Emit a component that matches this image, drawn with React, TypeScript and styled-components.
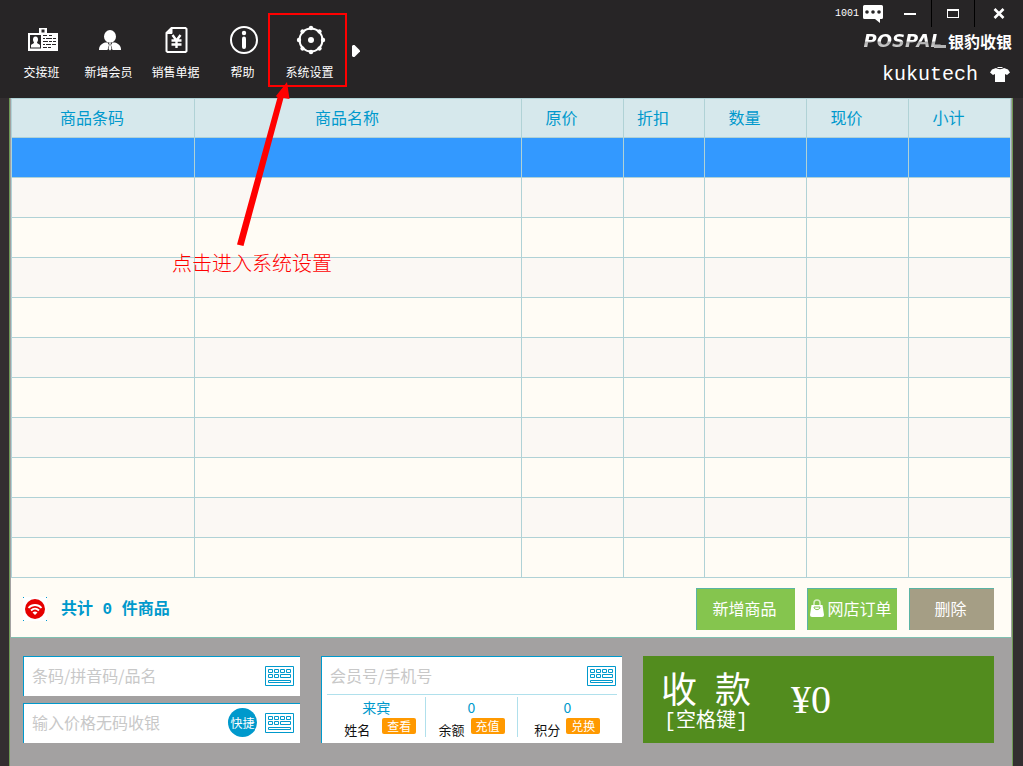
import React from "react";
import styled, { createGlobalStyle, css } from "styled-components";

const GlobalStyle = createGlobalStyle`
  *, *::before, *::after { box-sizing: border-box; }
  body {
    margin: 0;
    background: #332e30;
    font-family: "Noto Sans CJK SC", "Liberation Sans", sans-serif;
    font-size: 16px;
    color: #0099cc;
  }
  button, input { font: inherit; }
  button { margin: 0; padding: 0; border: 0; cursor: pointer; }
  svg { display: block; flex: none; }
`;

const Page = styled.div`
  min-height: 100vh;
  display: flex;
  flex-direction: column;
`;

/* ---------- title bar ---------- */

const Header = styled.header`
  display: flex;
  justify-content: space-between;
  height: 98px;
  background: #272526;
  color: #fff;
`;

const Toolbar = styled.nav`
  display: flex;
  align-items: flex-start;
  padding: 13px 0 0 8px;
`;

const ToolButton = styled.button`
  display: flex;
  flex-direction: column;
  align-items: center;
  gap: 8px;
  width: 67px;
  height: 74px;
  padding-top: 12px;
  background: none;
  color: #fff;
  font-size: 12px;
  line-height: 18px;
  white-space: nowrap;
`;

const Highlighted = styled.div`
  position: relative;
`;

const HighlightFrame = styled.div`
  position: absolute;
  inset: 0 -4px 0 -8px;
  border: 2px solid #f00;
  pointer-events: none;
`;

const Arrow = styled.svg`
  position: absolute;
  left: -40px;
  top: 67px;
  z-index: 2;
  pointer-events: none;
`;

const Callout = styled.p`
  position: absolute;
  left: -104px;
  top: 236px;
  z-index: 2;
  margin: 0;
  color: #f00;
  font-size: 20px;
  font-weight: 300;
  line-height: 28px;
  white-space: nowrap;
`;

const MoreButton = styled.button`
  display: flex;
  align-items: center;
  height: 76px;
  padding-left: 9px;
  background: none;
`;

const HeaderRight = styled.div`
  display: flex;
  flex-direction: column;
  align-items: flex-end;
`;

const WindowBar = styled.div`
  display: flex;
  align-items: center;
  height: 27px;
`;

const Messages = styled.button`
  display: flex;
  align-items: center;
  gap: 4px;
  margin-right: 6px;
  background: none;
  color: #fff;
  font: 10px/16px "Liberation Mono", monospace;
`;

const WindowButton = styled.button<{ $divided?: boolean }>`
  display: flex;
  align-items: center;
  justify-content: center;
  width: 48px;
  height: 27px;
  background: none;
  ${(p) =>
    p.$divided &&
    css`
      width: 43px;
      border-right: 1px solid #000;
    `}
`;

const Brand = styled.div`
  display: flex;
  align-items: center;
  gap: 2px;
  height: 28px;
  padding-right: 11px;
`;

const BrandLatin = styled.span`
  position: relative;
  padding-right: 4px;
  font: italic bold 18px/20px "DejaVu Sans", sans-serif;
  background: linear-gradient(#fff 50%, #aaa 55%, #d0d0d0 80%);
  background-clip: text;
  -webkit-background-clip: text;
  color: transparent;

  &::after {
    content: "";
    position: absolute;
    right: 0;
    bottom: 3px;
    width: 12px;
    height: 3px;
    background: #b4b4b4;
  }
`;

const BrandChinese = styled.span`
  font-size: 16px;
  font-weight: 700;
  line-height: 20px;
`;

const Account = styled.div`
  display: flex;
  align-items: center;
  gap: 12px;
  height: 40px;
  padding-right: 13px;
  font: 20px/28px "Liberation Mono", monospace;
`;

/* ---------- goods table ---------- */

const Frame = styled.main`
  flex: 1;
  display: flex;
  flex-direction: column;
  margin: 0 10px 0 9px;
  padding: 0 1px;
  border: solid #6f9a55;
  border-width: 0 1px;
  background: #a3a1a1;
`;

const GoodsTable = styled.table`
  width: 100%;
  table-layout: fixed;
  border-collapse: separate;
  border-spacing: 0;
  border-left: 1px solid #b0d2d6;
`;

const Column = styled.col<{ $width?: number }>`
  ${(p) => p.$width && css`width: ${p.$width}px;`}
`;

const HeadCell = styled.th`
  height: 40px;
  padding: 0 22px 2px 0;
  border: solid #b0d2d6;
  border-width: 1px 1px 1px 0;
  background: #d6e8ec;
  font-weight: 400;
  line-height: 24px;
`;

const Row = styled.tr<{ $selected?: boolean }>`
  background: ${(p) => (p.$selected ? "#3399ff" : "#fffcf5")};
  &:nth-child(even) { background: #fbf8f4; }
`;

const Cell = styled.td`
  height: 40px;
  padding: 0;
  border: solid #b0d2d6;
  border-width: 0 1px 1px 0;
`;

/* ---------- summary strip ---------- */

const Summary = styled.section`
  display: flex;
  align-items: center;
  justify-content: space-between;
  height: 60px;
  padding: 2px 17px 0 12px;
  border-bottom: 1px solid #7fc0b0;
  background: #fffcf5;
`;

const Total = styled.div`
  display: flex;
  align-items: center;
  gap: 14px;
`;

const TotalText = styled.span`
  padding-top: 2px;
  font: bold 16px/24px "Liberation Mono", "Noto Sans CJK SC", monospace;
`;

const Actions = styled.div`
  display: flex;
  gap: 12px;
`;

const ActionButton = styled.button<{ $width: number; $muted?: boolean }>`
  display: flex;
  align-items: center;
  justify-content: center;
  gap: 3px;
  width: ${(p) => p.$width}px;
  height: 42px;
  padding: 0 3px 2px 0;
  border: solid #5ab4a4;
  border-width: 1px 0 0 1px;
  background: ${(p) => (p.$muted ? "#a59e85" : "#85c54e")};
  color: #fff;
  line-height: 24px;
  white-space: nowrap;
`;

/* ---------- entry area ---------- */

const Entry = styled.section`
  display: grid;
  grid-template-columns: 277fr 301fr 351fr;
  gap: 21px;
  padding: 18px 17px 23px 12px;
`;

const Stack = styled.div`
  display: flex;
  flex-direction: column;
  gap: 7px;
`;

const Field = styled.div`
  display: flex;
  align-items: center;
  gap: 8px;
  height: 40px;
  padding: 0 6px 2px 8px;
  border: solid #0099cc;
  border-width: 1px 0 0 1px;
  background: #fff;
`;

const TextInput = styled.input`
  flex: 1;
  min-width: 0;
  padding: 0 0 2px;
  border: 0;
  outline: 0;
  background: none;
  color: #333;
  line-height: 24px;
  &::placeholder { color: #c8c8c8; opacity: 1; }
`;

const IconButton = styled.button`
  background: none;
`;

const QuickButton = styled.button`
  width: 29px;
  height: 29px;
  border-radius: 50%;
  background: #0099cc;
  color: #fff;
  font-size: 12px;
  line-height: 29px;
  white-space: nowrap;
`;

const MemberPanel = styled.div`
  border: solid #0099cc;
  border-width: 1px 0 0 1px;
  background: #fff;
`;

const MemberField = styled(Field)`
  height: 37px;
  padding-bottom: 0;
  border: 0;
`;

const MemberStats = styled.div`
  display: grid;
  grid-template-columns: 99fr 91fr 99fr;
  margin: 0 5px;
  padding: 2px 0 6px;
  border-top: 1px solid #b0e0ec;
`;

const Stat = styled.div`
  display: flex;
  flex-direction: column;
  align-items: center;
  height: 40px;
  border-right: 1px solid #b0e0ec;
  &:last-child { border-right: 0; }
`;

const StatValue = styled.span`
  font-size: 14px;
  line-height: 20px;
`;

const StatLine = styled.div<{ $spaced?: boolean }>`
  display: flex;
  align-items: flex-start;
  gap: ${(p) => (p.$spaced ? 12 : 6)}px;
  padding-left: ${(p) => (p.$spaced ? 8 : 0)}px;
  color: #111;
  font-size: 13px;
  line-height: 26px;
  white-space: nowrap;
`;

const StatButton = styled.button`
  width: 34px;
  height: 16px;
  margin-top: 1px;
  border-radius: 2px;
  background: #ff9900;
  color: #fff;
  font-size: 12px;
  line-height: 16px;
`;

const PayButton = styled.button`
  display: flex;
  align-items: center;
  gap: 40px;
  padding: 0 18px;
  background: #528c1e;
  color: #fff;
  text-align: left;
`;

const PayLabel = styled.span`
  display: flex;
  flex-direction: column;
  align-items: center;
  padding-top: 4px;
  white-space: pre;
`;

const PayTitle = styled.span`
  font: 36px/40px "Liberation Serif", "Noto Sans CJK SC", serif;
`;

const PayHint = styled.span`
  font: 20px/22px "Liberation Mono", "Noto Sans CJK SC", monospace;
`;

const PayAmount = styled.span`
  font: 40px/48px "Liberation Serif", serif;
`;

/* ---------- icons ---------- */

const ToolIcon = styled.svg.attrs({ width: 32, height: 30, viewBox: "-2 0 32 30" })`
  fill: none;
`;

const BadgeIcon = () => (
  <ToolIcon>
    <path fillRule="evenodd" fill="#fff" d="M11 3h8v5h11v18H0V8h11zM13.500 4.500v3h3v-3zM2 10v13.500h11V10z" />
    <path fill="#fff" d="M7.500 11.500c2 0 2.500 1.500 2.500 3s-.5 2-1 3c0 1 2 1.500 3 2.500v2.500H3V20c1-1 3-1.500 3-2.500-.5-1-1-1.500-1-3s.5-3 2.500-3z" />
    <path d="M15 10.500h4m2 0h3M15 13.500h2m1 0h6m1 0h3M15 16.500h5m1 0h3m1 0h3M15 19.500h2m1 0h5m1 0h4M15 22.500h4m1 0h3" stroke="#272526" />
  </ToolIcon>
);

const PersonIcon = () => (
  <ToolIcon>
    <ellipse cx="15" cy="11.500" rx="6" ry="6.500" fill="#fff" />
    <path fill="#fff" d="M4 25c0-4 2-6 6-7.500h10c4 1.500 6 3.500 6 7.500z" />
    <path d="M12.500 17.500h5l-1.500 2.500 1.500 5h-5l1.500-5z" fill="#272526" />
    <path d="M14 17.500h2l-.5 2 1 4.500-1.500 1.500-1.500-1.500 1-4.500z" fill="#fff" />
  </ToolIcon>
);

const ReceiptIcon = () => (
  <ToolIcon stroke="#fff">
    <path d="M9.500 3H23.500l1 1v22l-1 1h-18l-1-1V8z" strokeWidth="2" />
    <path d="M5 8.500L10 3v5.500z" fill="#fff" />
    <path d="M10.500 10l4 5.500 4-5.500M14.500 15v8M9.500 15.500h10M9.500 19.500h10" strokeWidth="2.400" />
  </ToolIcon>
);

const InfoIcon = () => (
  <ToolIcon>
    <circle cx="15" cy="15" r="13" stroke="#fff" strokeWidth="2" />
    <circle cx="15" cy="8" r="2.200" fill="#fff" />
    <path d="M15 13.500v8.500" stroke="#fff" strokeWidth="4" strokeLinecap="round" />
  </ToolIcon>
);

const GearIcon = () => (
  <ToolIcon>
    <circle cx="15" cy="15" r="11.500" stroke="#fff" strokeWidth="2" />
    <circle cx="15" cy="15" r="3" fill="#fff" />
    {[0, 45, 90, 135, 180, 225, 270, 315].map((angle) => (
      <circle key={angle} cx="15" cy="3" r="2.200" fill="#fff" transform={`rotate(${angle} 15 15)`} />
    ))}
  </ToolIcon>
);

const ChatIcon = () => (
  <svg width="20" height="18" viewBox="0 0 20 18">
    <path d="M1.500 0h17A1.500 1.500 0 0 1 20 1.500v11a1.500 1.500 0 0 1-1.500 1.500H17v4l-5-4H1.500A1.500 1.500 0 0 1 0 12.500v-11A1.500 1.500 0 0 1 1.500 0z" fill="#fff" />
    <circle cx="4" cy="7" r="1.800" fill="#272526" />
    <circle cx="10" cy="7" r="1.800" fill="#272526" />
    <circle cx="16" cy="7" r="1.800" fill="#272526" />
  </svg>
);

const ShirtIcon = () => (
  <svg width="20" height="16" viewBox="0 0 20 16" fill="#fff">
    <path d="M6 1c2 1.500 6 1.500 8 0l4 1.500 2 3L17 8l-2-1v8H5V7L3 8 0 5.500l2-3z" />
    <path d="M7 0h6l-1 1H8z" />
  </svg>
);

const WifiIcon = () => (
  <svg width="24" height="24" viewBox="0 0 24 24">
    <path d="M0 0h24v24H0z" fill="#fff" />
    <path d="M0 0h1v1H0zM23 0h1v1h-1zM0 23h1v1H0zM23 23h1v1h-1z" fill="#0099cc" />
    <circle cx="12" cy="12" r="10" fill="#e60000" />
    <path d="M5.500 11c3.500-4 9.500-4 13 0M8 13.500c2.500-2.500 5.500-2.500 8 0" fill="none" stroke="#fff" strokeWidth="1.800" />
    <path d="M9.500 15.500c1.500-1.200 3.500-1.200 5 0L12 18z" fill="#fff" />
  </svg>
);

const BagIcon = () => (
  <svg width="14" height="18" viewBox="0 0 14 18">
    <path d="M4 8V4c0-4 6-4 6 0v4" fill="none" stroke="#d8eec6" strokeWidth="1.500" />
    <path d="M1.500 6h11L14 16a2 2 0 0 1-2 2H2a2 2 0 0 1-2-2z" fill="#fff" />
    <path d="M4 8c0 3.500 6 3.500 6 0z" fill="none" stroke="#85c54e" />
  </svg>
);

const KeyboardIcon = () => (
  <svg width="29" height="20" viewBox="0 0 29 20" fill="none" stroke="#0099cc">
    <path d="M.5.5h28v19H.5zM3.500 3.500h4v3h-4zM9.500 3.500h4v3h-4zM15.500 3.500h4v3h-4zM21.500 3.500h4v3h-4zM3.500 8.500h4v3h-4zM9.500 8.500h4v3h-4zM15.500 8.500h10v3h-10zM3.500 14.500h22v2h-22z" />
  </svg>
);

/* ---------- data ---------- */

const tools = [
  { label: "交接班", Icon: BadgeIcon },
  { label: "新增会员", Icon: PersonIcon },
  { label: "销售单据", Icon: ReceiptIcon },
  { label: "帮助", Icon: InfoIcon },
];

const columns: { title: string; width?: number }[] = [
  { title: "商品条码", width: 183 },
  { title: "商品名称" },
  { title: "原价", width: 102 },
  { title: "折扣", width: 81 },
  { title: "数量", width: 102 },
  { title: "现价", width: 102 },
  { title: "小计", width: 102 },
];

const stats = [
  { value: "来宾", name: "姓名", action: "查看", spaced: true },
  { value: "0", name: "余额", action: "充值" },
  { value: "0", name: "积分", action: "兑换" },
];

const rows = Array.from({ length: 11 }, (_, i) => i);

export default function App() {
  return (
    <Page>
      <GlobalStyle />
      <Header>
        <Toolbar>
          {tools.map(({ label, Icon }) => (
            <ToolButton key={label} type="button">
              <Icon />
              {label}
            </ToolButton>
          ))}
          <Highlighted>
            <ToolButton type="button">
              <GearIcon />
              系统设置
            </ToolButton>
            <HighlightFrame />
            <Arrow width="60" height="170" viewBox="0 0 60 170" fill="#f00">
              <path d="M1 164.500L41.500 17.500 40 16 51 2 53.500 19 47.500 18 7.500 166z" />
            </Arrow>
            <Callout>点击进入系统设置</Callout>
          </Highlighted>
          <MoreButton type="button" aria-label="更多">
            <svg width="8" height="12" viewBox="0 0 8 12">
              <path d="M0 1l1-1h1.500L8 5.500v1L2.500 12H1l-1-1z" fill="#fff" />
            </svg>
          </MoreButton>
        </Toolbar>

        <HeaderRight>
          <WindowBar>
            <Messages type="button">
              1001
              <ChatIcon />
            </Messages>
            <WindowButton type="button" aria-label="最小化" $divided>
              <svg width="12" height="2"><path d="M0 0h12v2H0z" fill="#fff" /></svg>
            </WindowButton>
            <WindowButton type="button" aria-label="最大化" $divided>
              <svg width="12" height="9" viewBox="0 0 12 9">
                <path d="M0 0h12v9H0zM1 2v6h10V2z" fill="#fff" fillRule="evenodd" />
              </svg>
            </WindowButton>
            <WindowButton type="button" aria-label="关闭">
              <svg width="12" height="11" viewBox="0 0 12 11">
                <path d="M1.500 1l9 9M10.500 1l-9 9" stroke="#fff" strokeWidth="2.600" />
              </svg>
            </WindowButton>
          </WindowBar>
          <Brand>
            <BrandLatin>POSPAL</BrandLatin>
            <BrandChinese>银豹收银</BrandChinese>
          </Brand>
          <Account>
            kukutech
            <ShirtIcon />
          </Account>
        </HeaderRight>
      </Header>

      <Frame>
        <GoodsTable>
          <colgroup>
            {columns.map((c) => (
              <Column key={c.title} $width={c.width} />
            ))}
          </colgroup>
          <thead>
            <tr>
              {columns.map((c) => (
                <HeadCell key={c.title} scope="col">{c.title}</HeadCell>
              ))}
            </tr>
          </thead>
          <tbody>
            {rows.map((i) => (
              <Row key={i} $selected={i === 0}>
                {columns.map((c) => (
                  <Cell key={c.title} />
                ))}
              </Row>
            ))}
          </tbody>
        </GoodsTable>

        <Summary>
          <Total>
            <WifiIcon />
            <TotalText>共计 0 件商品</TotalText>
          </Total>
          <Actions>
            <ActionButton type="button" $width={99}>新增商品</ActionButton>
            <ActionButton type="button" $width={90}>
              <BagIcon />
              网店订单
            </ActionButton>
            <ActionButton type="button" $width={85} $muted>删除</ActionButton>
          </Actions>
        </Summary>

        <Entry>
          <Stack>
            <Field>
              <TextInput aria-label="商品" placeholder="条码/拼音码/品名" />
              <IconButton type="button" aria-label="键盘"><KeyboardIcon /></IconButton>
            </Field>
            <Field>
              <TextInput aria-label="价格" placeholder="输入价格无码收银" />
              <QuickButton type="button">快捷</QuickButton>
              <IconButton type="button" aria-label="键盘"><KeyboardIcon /></IconButton>
            </Field>
          </Stack>

          <MemberPanel>
            <MemberField>
              <TextInput aria-label="会员" placeholder="会员号/手机号" />
              <IconButton type="button" aria-label="键盘"><KeyboardIcon /></IconButton>
            </MemberField>
            <MemberStats>
              {stats.map((s) => (
                <Stat key={s.name}>
                  <StatValue>{s.value}</StatValue>
                  <StatLine $spaced={s.spaced}>
                    {s.name}
                    <StatButton type="button">{s.action}</StatButton>
                  </StatLine>
                </Stat>
              ))}
            </MemberStats>
          </MemberPanel>

          <PayButton type="button">
            <PayLabel>
              <PayTitle>{"收  款"}</PayTitle>
              <PayHint>[空格键]</PayHint>
            </PayLabel>
            <PayAmount>¥0</PayAmount>
          </PayButton>
        </Entry>
      </Frame>
    </Page>
  );
}
